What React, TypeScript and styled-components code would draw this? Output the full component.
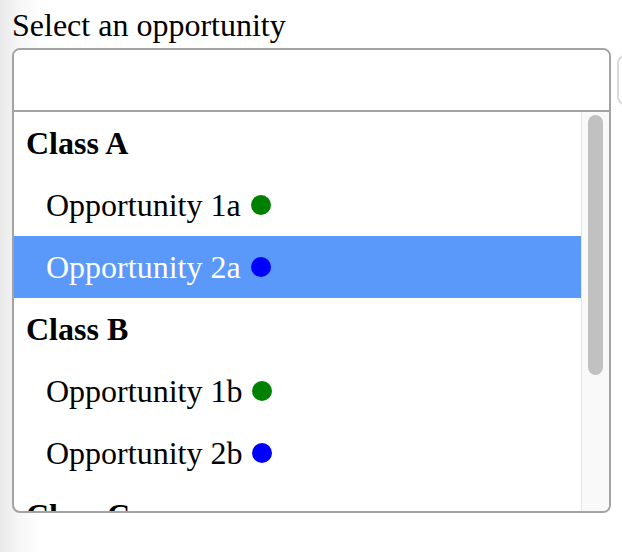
import { createGlobalStyle } from 'styled-components';
import styled from 'styled-components';

const GlobalStyle = createGlobalStyle`
  html, body {
    margin: 0;
    padding: 0;
    overflow: hidden;
  }
  body {
    width: 622px;
    height: 552px;
    background: linear-gradient(to right, #e8e8e8 0, #f6f6f6 18px, #ffffff 42px);
    font-family: "Liberation Serif", "Times New Roman", serif;
    color: #000;
  }
`;

const Page = styled.div`
  padding: 8px 0 0 12px;
`;

const Label = styled.div`
  font-size: 32px;
  line-height: 35px;
  margin-bottom: 5px;
`;

const Row = styled.div`
  display: flex;
  align-items: flex-start;
  gap: 6px;
`;

const Combo = styled.div`
  width: 599px;
  flex: none;
  border: 2px solid #a3a3a3;
  border-radius: 8px;
  background: #fff;
  overflow: hidden;
  box-sizing: border-box;
`;

const Input = styled.input`
  display: block;
  width: 100%;
  height: 62px;
  box-sizing: border-box;
  border: none;
  border-bottom: 2px solid #a3a3a3;
  outline: none;
  font: inherit;
  font-size: 32px;
  padding: 0 14px;
  background: #fff;
`;

const ListArea = styled.div`
  display: flex;
  height: 399px;
`;

const List = styled.ul`
  list-style: none;
  margin: 0;
  padding: 0;
  flex: 1;
  overflow: hidden;
`;

const Track = styled.div`
  width: 28px;
  flex: none;
  box-sizing: border-box;
  background: #f9f9f9;
  border-left: 1px solid #e6e6e6;
  padding: 3px 0 0 6px;
`;

const Thumb = styled.div`
  width: 15px;
  height: 260px;
  border-radius: 8px;
  background: #c1c1c1;
`;

const Group = styled.li`
  height: 62px;
  display: flex;
  align-items: center;
  padding-left: 12px;
  font-size: 32px;
  font-weight: bold;
`;

const Option = styled.li<{ $active?: boolean }>`
  height: 62px;
  display: flex;
  align-items: center;
  gap: 10px;
  padding-left: 32px;
  font-size: 32px;
  background: ${({ $active }) => ($active ? '#5a98fa' : 'transparent')};
  color: ${({ $active }) => ($active ? '#fff' : '#000')};
`;

const Dot = styled.span<{ $color: string }>`
  width: 20px;
  height: 20px;
  border-radius: 50%;
  background: ${({ $color }) => $color};
  flex: none;
`;

const SideButton = styled.button`
  margin-top: 7px;
  width: 40px;
  height: 50px;
  flex: none;
  border: 2px solid #dadada;
  border-radius: 8px;
  background: #fff;
`;

const groups = [
  {
    name: 'Class A',
    items: [
      { label: 'Opportunity 1a', color: '#008000' },
      { label: 'Opportunity 2a', color: '#0000ff', active: true },
    ],
  },
  {
    name: 'Class B',
    items: [
      { label: 'Opportunity 1b', color: '#008000' },
      { label: 'Opportunity 2b', color: '#0000ff' },
    ],
  },
  { name: 'Class C', items: [] as { label: string; color: string; active?: boolean }[] },
];

export default function App() {
  return (
    <>
      <GlobalStyle />
      <Page>
        <Label>Select an opportunity</Label>
        <Row>
          <Combo>
            <Input type="text" />
            <ListArea>
              <List>
                {groups.map((g) => [
                  <Group key={g.name}>{g.name}</Group>,
                  ...g.items.map((o) => (
                    <Option key={o.label} $active={o.active}>
                      {o.label}
                      <Dot $color={o.color} />
                    </Option>
                  )),
                ])}
              </List>
              <Track>
                <Thumb />
              </Track>
            </ListArea>
          </Combo>
          <SideButton />
        </Row>
      </Page>
    </>
  );
}
